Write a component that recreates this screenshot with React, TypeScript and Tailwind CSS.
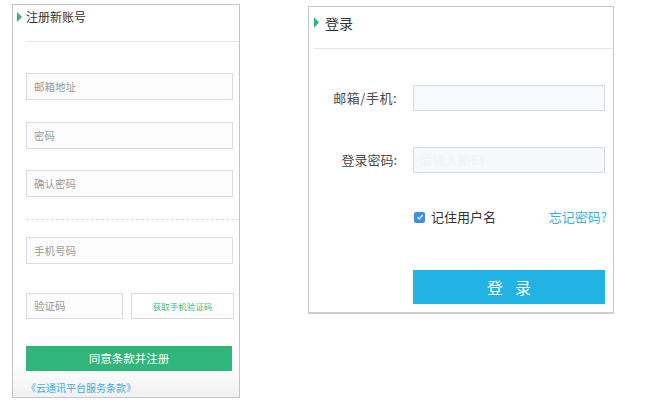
import React from "react";

const F = { fontFamily: '"Noto Sans CJK SC", "Noto Sans", sans-serif' };

function Tri({ h, w }: { h: number; w: number }) {
  return (
    <svg width={w} height={h} viewBox={`0 0 ${w} ${h}`} className="shrink-0">
      <polygon points={`0,0 ${w},${h / 2} 0,${h}`} fill="#2bb98a" />
    </svg>
  );
}

function LInput({ ph, w = "w-[207px]", mt }: { ph: string; w?: string; mt: string }) {
  return (
    <div
      className={`${w} ${mt} h-[27px] border border-[#d6dbe4] bg-[#fcfcfd] flex items-center pl-[7px] text-[10.5px] text-[#9a9a9a] shrink-0`}
    >
      {ph}
    </div>
  );
}

export default function App() {
  return (
    <div className="w-[657px] h-[406px] bg-white flex items-start overflow-hidden" style={F}>
      {/* Left: register */}
      <div className="relative ml-[12px] mt-[4px] w-[228px] h-[394px] border border-[#c4c4c4] overflow-hidden flex flex-col bg-[linear-gradient(to_bottom,#ffffff_91%,#f1f1f1)]">
        <div className="h-[36px] flex items-start pt-[5px] pl-[4px] gap-[4px] shrink-0">
          <div className="mt-[2px]"><Tri w={5} h={10} /></div>
          <span className="text-[12px] leading-[14px] text-[#333]">注册新账号</span>
        </div>
        <div className="ml-[13px] h-px bg-[#e4e6ea] shrink-0" />
        <div className="pl-[13px] flex flex-col">
          <LInput ph="邮箱地址" mt="mt-[31px]" />
          <LInput ph="密码" mt="mt-[22px]" />
          <LInput ph="确认密码" mt="mt-[21px]" />
        </div>
        <div className="ml-[13px] mt-[22px] border-t border-dashed border-[#dcdcdc] shrink-0" />
        <div className="pl-[13px] flex flex-col">
          <LInput ph="手机号码" mt="mt-[17px]" />
          <div className="mt-[29px] flex gap-[8px] shrink-0">
            <div className="w-[97px] h-[26px] border border-[#d6dbe4] bg-[#fcfcfd] flex items-center pl-[7px] text-[10.5px] text-[#9a9a9a]">
              验证码
            </div>
            <div className="w-[103px] h-[26px] border border-[#d6dbe4] bg-white flex items-center justify-center text-[8.5px] text-[#3cb878]">
              获取手机验证码
            </div>
          </div>
          <div className="mt-[27px] w-[206px] h-[25px] bg-[#30b67b] flex items-center justify-center text-[11.5px] text-white shrink-0">
            同意条款并注册
          </div>
          <div className="mt-[10px] text-[10px] leading-[14px] text-[#3ab0e0] shrink-0">
            《云通讯平台服务条款》
          </div>
        </div>
      </div>

      {/* Right: login */}
      <div className="ml-[68px] mt-[6px] w-[306px] border border-[#c8c8c8] border-b-2 border-b-[#cfcfcf] flex flex-col pb-[8px]">
        <div className="h-[41px] flex items-start pt-[9px] pl-[5px] gap-[6px] shrink-0">
          <div className="mt-[1px]"><Tri w={5} h={11} /></div>
          <span className="text-[14px] leading-[14px] text-[#333]">登录</span>
        </div>
        <div className="ml-[5px] h-px bg-[#e4e6ea]" />
        <div className="mt-[36px] flex items-center">
          <div className="w-[88px] text-right text-[13px] text-[#4a4a4a] tracking-[0.5px]">邮箱/手机:</div>
          <div className="ml-[16px] w-[192px] h-[26px] border border-[#d6dbe4] bg-[#f8f9fb]" />
        </div>
        <div className="mt-[36px] flex items-center">
          <div className="w-[88px] text-right text-[13px] text-[#4a4a4a]">登录密码:</div>
          <div className="ml-[16px] w-[192px] h-[26px] border border-[#d6dbe4] bg-[#f7f8fa] flex items-center pl-[5px] text-[13px] text-[#f2f3f6]">
            请输入密码
          </div>
        </div>
        <div className="mt-[36px] h-[16px] flex items-center pl-[105px] pr-[6px]">
          <div className="w-[11px] h-[11px] rounded-[2px] bg-[#3d8fe6] flex items-center justify-center">
            <svg width="8" height="8" viewBox="0 0 8 8">
              <path d="M1.5 4.2 L3.3 6 L6.6 2" fill="none" stroke="white" strokeWidth="1.2" />
            </svg>
          </div>
          <span className="ml-[6px] text-[13px] text-[#333]">记住用户名</span>
          <span className="ml-auto text-[13px] text-[#3ab0e0]">忘记密码?</span>
        </div>
        <div className="mt-[45px] ml-[104px] w-[192px] h-[34px] bg-[#20b3e3] flex items-center justify-center text-[16px] text-white">
          <span>登</span>
          <span className="ml-[12px]">录</span>
        </div>
      </div>
    </div>
  );
}
